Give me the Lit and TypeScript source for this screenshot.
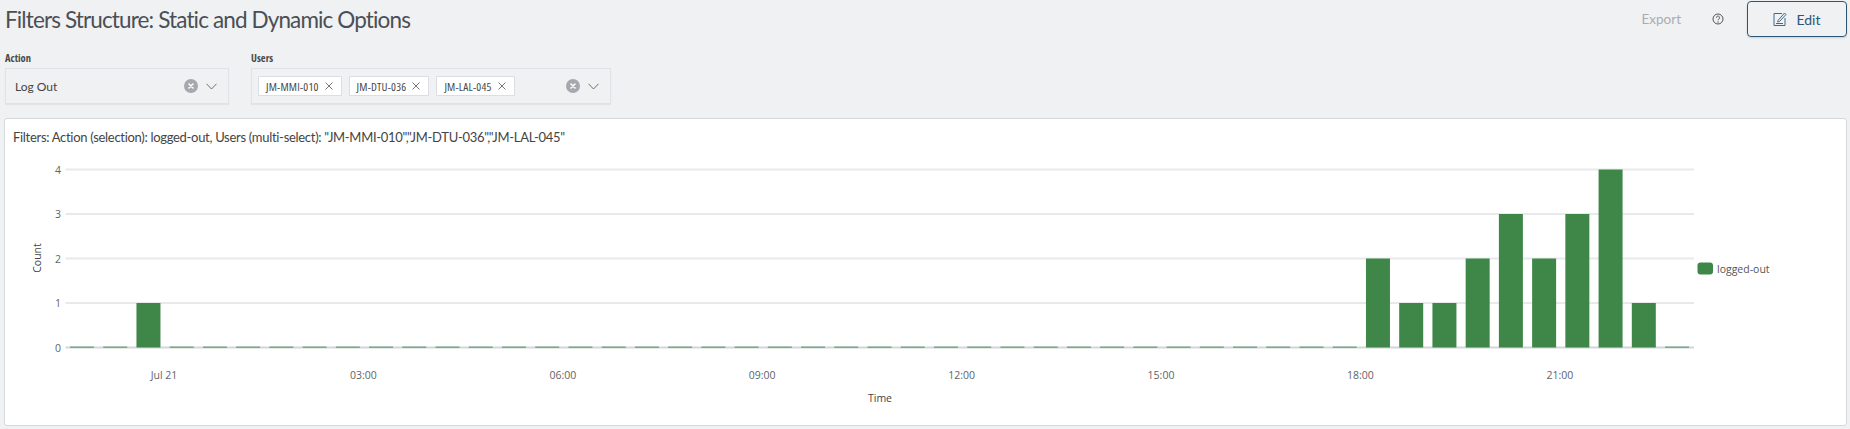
import { LitElement, html, css, svg } from "lit";
import { customElement } from "lit/decorators.js";

const VALUES: Record<number, number> = { 2: 1, 39: 2, 40: 1, 41: 1, 42: 2, 43: 3, 44: 2, 45: 3, 46: 4, 47: 1 };
const TICKS = ["Jul 21", "03:00", "06:00", "09:00", "12:00", "15:00", "18:00", "21:00"];
const PITCH = 33.23;
const UNIT = 44.5;
const GREEN = "#3f8749";

@customElement("app-root")
export class AppRoot extends LitElement {
  static styles = css`
    :host { display: block; width: 1850px; height: 429px; background: #f0f1f3; overflow: hidden; font-family: "Lato", sans-serif; color: #444; box-sizing: border-box; }
    .head { display: flex; align-items: center; height: 37px; padding: 1px 3px 0 5px; box-sizing: border-box; }
    .title { font-size: 22.5px; color: #4a4f55; flex: 1; letter-spacing: -.87px; white-space: nowrap; }
    .export { font-size: 13.5px; color: #a9adb1; margin-right: 31px; }
    .help { width: 12px; height: 12px; margin-right: 23px; display: block; }
    .edit { width: 100px; height: 36px; box-sizing: border-box; border: 1px solid #2b5675; border-radius: 4px; display: flex; align-items: center; justify-content: center; gap: 9px; color: #2b5675; font-size: 14px; box-shadow: 0 1px 2px rgba(0,0,0,.15); }
    .edit svg { width: 14px; height: 14px; }
    .filters { display: flex; gap: 22px; padding: 14px 0 0 5px; height: 81px; box-sizing: border-box; }
    .field { display: flex; flex-direction: column; }
    .label { font-family: "Open Sans", sans-serif; font-size: 10.5px; font-weight: 700; font-stretch: 75%; color: #4a4a4a; height: 17px; line-height: 14px; }
    .select { height: 36px; box-sizing: border-box; border: 1px solid #e0e2e6; box-shadow: 0 1px 1px rgba(0,0,0,.05); display: flex; align-items: center; padding-left: 6px; padding-right: 11px; }
    .action { width: 224px; }
    .users { width: 360px; }
    .value { font-size: 12px; color: #444; margin-left: 3px; flex: 1; }
    .tags { display: flex; gap: 7px; flex: 1; }
    .tag { height: 20px; box-sizing: border-box; background: #fff; border: 1px solid #dcdee2; display: flex; align-items: center; gap: 6px; padding: 0 8px 0 7px; font-family: "Open Sans", sans-serif; font-size: 11.5px; font-stretch: 75%; letter-spacing: .2px; color: #4a4a4a; white-space: nowrap; }
    .tag svg { width: 8px; height: 8px; flex: none; }
    .clear { width: 14px; height: 14px; display: block; margin-right: 8px; flex: none; }
    .chev { width: 11px; height: 7px; display: block; flex: none; }
    .panel { margin: 0 3px 0 4px; height: 308px; box-sizing: border-box; background: #fff; border: 1px solid #d6d8dc; border-radius: 3px; position: relative; }
    .summary { font-size: 13px; letter-spacing: -.3px; color: #444; padding: 9px 0 0 8px; line-height: 18px; white-space: nowrap; }
    .chart { display: block; position: absolute; left: -5px; top: -119px; font-family: "Open Sans", sans-serif; }
    .tick { font-size: 10.5px; fill: #5f6368; }
    .legend { font-size: 10.5px; fill: #555; }
    .axis { font-size: 10.5px; fill: #444; }
  `;

  chart() {
    const yFor = (v: number) => 347.5 - v * UNIT;
    const bars = Array.from({ length: 49 }, (_, i) => {
      const v = VALUES[i] ?? 0;
      const x = 70 + i * PITCH;
      return v
        ? svg`<rect x=${x} y=${yFor(v)} width="24" height=${v * UNIT} fill=${GREEN}></rect>`
        : svg`<rect x=${x} y="346.5" width="24" height="1.4" fill="#6fa678"></rect>`;
    });
    return svg`
      <svg class="chart" width="1850" height="429" viewBox="0 0 1850 429">
        ${[0, 1, 2, 3, 4].map((v) => svg`
          <line x1="65.5" x2="1694" y1=${yFor(v)} y2=${yFor(v)} stroke=${v === 0 ? "#d3d5d9" : "#e8e9ec"} stroke-width="2"></line>
          <text class="tick" x="61" y=${yFor(v) + 4} text-anchor="end">${v}</text>`)}
        ${bars}
        ${TICKS.map((t, i) => svg`<text class="tick" x=${164 + i * 199.4} y="379" text-anchor="middle">${t}</text>`)}
        <text class="axis" x="880" y="402" text-anchor="middle">Time</text>
        <text class="axis" transform="translate(41 258) rotate(-90)" text-anchor="middle">Count</text>
        <rect x="1697.5" y="262.5" width="15.5" height="12" rx="3" fill=${GREEN}></rect>
        <text class="legend" x="1717" y="272.5">logged-out</text>
      </svg>`;
  }

  clear() {
    return html`<svg class="clear" viewBox="0 0 14 14"><circle cx="7" cy="7" r="7" fill="#a5a8ad"></circle><path d="M5 5l4 4M9 5l-4 4" stroke="#fff" stroke-width="1.6" stroke-linecap="round"></path></svg>`;
  }
  chev() {
    return html`<svg class="chev" viewBox="0 0 11 7"><path d="M.5.8L5.5 6 10.5.8" fill="none" stroke="#6b6f75" stroke-width="1"></path></svg>`;
  }
  tag(t: string) {
    return html`<span class="tag">${t}<svg viewBox="0 0 8 8"><path d="M.5.5l7 7M7.5.5l-7 7" stroke="#555" stroke-width=".8"></path></svg></span>`;
  }

  render() {
    return html`
      <div class="head">
        <div class="title">Filters Structure: Static and Dynamic Options</div>
        <span class="export">Export</span>
        <svg class="help" viewBox="0 0 12 12"><circle cx="6" cy="6" r="5" fill="none" stroke="#555" stroke-width="1"></circle><path d="M4.4 4.7a1.6 1.6 0 1 1 2.5 1.3c-.6.4-.9.7-.9 1.2" fill="none" stroke="#555" stroke-width="1"></path><circle cx="6" cy="9" r=".7" fill="#555"></circle></svg>
        <div class="edit">
          <svg viewBox="0 0 14 14"><path d="M9 1.5H1v12h11V6" fill="none" stroke="#3f6a88" stroke-width="1"></path><path d="M5 8.5L11.5 1 13 2.5 6.5 9.5 4.8 10z" fill="none" stroke="#3f6a88" stroke-width="1"></path><path d="M3 11.5h7" stroke="#3f6a88" stroke-width="1"></path></svg>
          Edit
        </div>
      </div>
      <div class="filters">
        <div class="field">
          <div class="label">Action</div>
          <div class="select action"><span class="value">Log Out</span>${this.clear()}${this.chev()}</div>
        </div>
        <div class="field">
          <div class="label">Users</div>
          <div class="select users">
            <div class="tags">${["JM-MMI-010", "JM-DTU-036", "JM-LAL-045"].map((t) => this.tag(t))}</div>
            ${this.clear()}${this.chev()}
          </div>
        </div>
      </div>
      <div class="panel">
        <div class="summary">Filters: Action (selection): logged-out, Users (multi-select): "JM-MMI-010","JM-DTU-036","JM-LAL-045"</div>
        ${this.chart()}
      </div>
    `;
  }
}
